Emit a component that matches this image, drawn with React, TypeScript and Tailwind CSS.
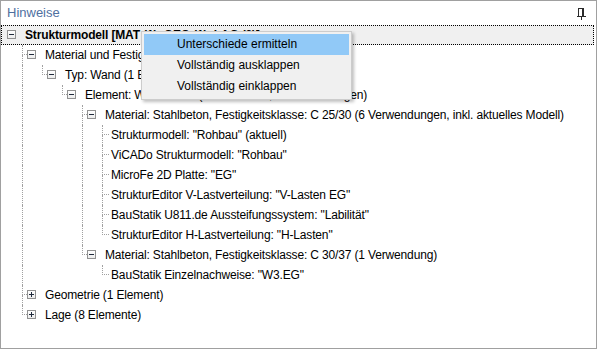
import * as React from "react";

type TreeNode = {
  label: string;
  bold?: boolean;
  open?: boolean;
  children?: TreeNode[];
};

type FlatRow = {
  node: TreeNode;
  depth: number;
  guides: boolean[];
  last: boolean;
};

const tree: TreeNode = {
  label: "Strukturmodell [MAT (1), GEO (1), LAG (8)]",
  bold: true,
  open: true,
  children: [
    {
      label: "Material und Festigkeitsklasse (1 Element)",
      open: true,
      children: [
        {
          label: "Typ: Wand (1 Element)",
          open: true,
          children: [
            {
              label: "Element: Wand W3.1 (2 Materialien, 7 Verwendungen)",
              open: true,
              children: [
                {
                  label:
                    "Material: Stahlbeton, Festigkeitsklasse: C 25/30 (6 Verwendungen, inkl. aktuelles Modell)",
                  open: true,
                  children: [
                    { label: 'Strukturmodell: "Rohbau" (aktuell)' },
                    { label: 'ViCADo Strukturmodell: "Rohbau"' },
                    { label: 'MicroFe 2D Platte: "EG"' },
                    { label: 'StrukturEditor V-Lastverteilung: "V-Lasten EG"' },
                    { label: 'BauStatik U811.de Aussteifungssystem: "Labilität"' },
                    { label: 'StrukturEditor H-Lastverteilung: "H-Lasten"' },
                  ],
                },
                {
                  label: "Material: Stahlbeton, Festigkeitsklasse: C 30/37 (1 Verwendung)",
                  open: true,
                  children: [{ label: 'BauStatik Einzelnachweise: "W3.EG"' }],
                },
              ],
            },
          ],
        },
      ],
    },
    { label: "Geometrie (1 Element)", children: [{ label: "" }] },
    { label: "Lage (8 Elemente)", children: [{ label: "" }] },
  ],
};

function flatten(node: TreeNode, depth: number, guides: boolean[], last: boolean, out: FlatRow[]) {
  out.push({ node, depth, guides, last });
  if (node.open && node.children) {
    const kids = node.children;
    kids.forEach((c, i) => flatten(c, depth + 1, [...guides, !last], i === kids.length - 1, out));
  }
  return out;
}

const menuItems = ["Unterschiede ermitteln", "Vollständig ausklappen", "Vollständig einklappen"];

function Expander({ open }: { open: boolean }) {
  return (
    <div className="mt-[5px] grid h-[9px] w-[9px] shrink-0 place-items-center self-start border border-[#919191] bg-gradient-to-b from-white to-[#ececec]">
      <div className="col-start-1 row-start-1 h-px w-[5px] bg-[#1f2a3c]" />
      {!open && <div className="col-start-1 row-start-1 h-[5px] w-px bg-[#1f2a3c]" />}
    </div>
  );
}

function Connector({ last, width }: { last: boolean; width: string }) {
  return (
    <div className={`ml-px flex h-[20px] shrink-0 flex-col ${width}`}>
      <div className="h-[10px] border-b border-l border-dotted border-[#a0a0a0]" />
      <div className={`h-[10px] ${last ? "" : "border-l border-dotted border-[#a0a0a0]"}`} />
    </div>
  );
}

function Row({ row }: { row: FlatRow }) {
  const { node, depth, guides, last } = row;
  const isFolder = !!node.children;
  const selected = depth === 0;
  return (
    <div
      className={`flex h-[20px] items-start whitespace-nowrap ${
        selected ? "mr-px bg-[#f0f0f0] outline-1 -outline-offset-1 outline-dotted outline-black" : ""
      }`}
    >
      {guides.map((g, k) =>
        k === 0 ? (
          <div key={k} className="w-[20px] shrink-0" />
        ) : (
          <div key={k} className="h-[20px] w-[20px] shrink-0">
            {g && <div className="ml-px h-[20px] border-l border-dotted border-[#a0a0a0]" />}
          </div>
        )
      )}
      {depth === 0 ? (
        <div className="w-[6px] shrink-0" />
      ) : (
        <Connector last={last} width={isFolder ? "w-[5px]" : "w-[7px]"} />
      )}
      {isFolder && <Expander open={!!node.open} />}
      <span
        className={`${isFolder ? "ml-[9px]" : "ml-[2px]"} leading-[20px] tracking-[-0.15px] ${
          node.bold ? "font-bold" : ""
        }`}
      >
        {node.label}
      </span>
    </div>
  );
}

function Pin() {
  return (
    <svg width="9" height="12" viewBox="0 0 9 12" className="mt-[7px]">
      <g fill="none" stroke="#2b2b2b" strokeWidth="1" shapeRendering="crispEdges">
        <line x1="1" y1="0.5" x2="7" y2="0.5" />
        <line x1="1.5" y1="0" x2="1.5" y2="8" />
        <line x1="0" y1="8.5" x2="9" y2="8.5" />
        <line x1="4.5" y1="9" x2="4.5" y2="12" />
      </g>
      <rect x="5" y="0" width="2" height="8" fill="#2b2b2b" shapeRendering="crispEdges" />
    </svg>
  );
}

export default function App() {
  const rows = flatten(tree, 0, [], true, []);
  return (
    <div
      className="relative h-[350px] w-[597px] overflow-hidden bg-white text-[12px] text-black"
      style={{ fontFamily: '"Liberation Sans", Arial, sans-serif' }}
    >
      <div className="flex h-[349px] w-[597px] flex-col border border-[#a0a0a0]">
        <div className="flex h-[24px] shrink-0 items-start justify-between pl-[6px] pr-[10px]">
          <span className="leading-[24px] text-[13px] text-[#4f6f9f]">Hinweise</span>
          <Pin />
        </div>
        <div className="flex flex-col pr-px">
          {rows.map((r, i) => (
            <Row key={i} row={r} />
          ))}
        </div>
      </div>

      <div className="absolute left-[141px] top-[31px] w-[211px] border border-[#cccccc] bg-[#f0f0f0] p-[2px] shadow-[2px_2px_3px_rgba(0,0,0,0.25)]">
        {menuItems.map((m, i) => (
          <div
            key={m}
            className={`h-[21px] pl-[33px] leading-[21px] ${i === 0 ? "bg-[#91c9f7]" : ""}`}
          >
            {m}
          </div>
        ))}
      </div>
    </div>
  );
}
